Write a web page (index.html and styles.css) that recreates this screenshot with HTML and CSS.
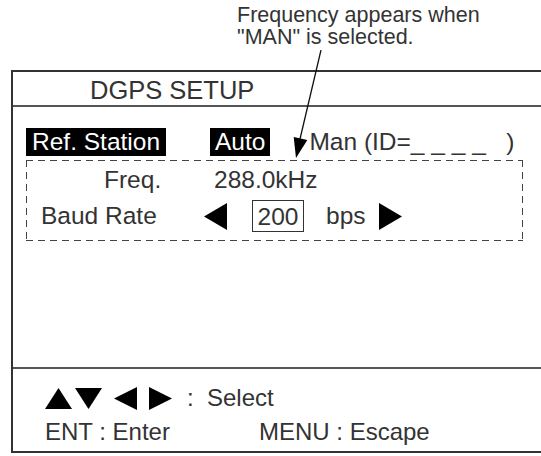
FILE: index.html
```html
<!DOCTYPE html>
<html>
<head>
    <meta charset="utf-8" />
    <title>DGPS SETUP</title>
    <link rel="stylesheet" href="styles.css">
</head>
<body>
    <div class="note">
        <div>Frequency appears when</div>
        <div>"MAN" is selected.</div>
    </div>

    <div class="screen">
        <div class="title">DGPS SETUP</div>
        <div class="main">
            <div class="opts">
                <span class="hl ref">Ref. Station</span>
                <span class="hl auto">Auto</span>
                <span class="man">Man (ID=_ _ _ _   )</span>
            </div>
            <div class="dashbox">
                <div class="row freq">
                    <span class="lbl">Freq.</span>
                    <span>288.0kHz</span>
                </div>
                <div class="row baud">
                    <span class="lbl">Baud Rate</span>
                    <svg class="tri" width="23" height="27" viewBox="0 0 23 27"><polygon points="23,0 23,27 0,13.5" /></svg>
                    <span class="val">200</span>
                    <span class="unit">bps</span>
                    <svg class="tri" width="23" height="27" viewBox="0 0 23 27"><polygon points="0,0 0,27 23,13.5" /></svg>
                </div>
            </div>
        </div>
        <div class="foot">
            <div class="keys">
                <svg width="27" height="21" viewBox="0 0 27 21"><polygon points="13.5,0 27,21 0,21" /></svg>
                <svg width="27" height="21" viewBox="0 0 27 21"><polygon points="0,0 27,0 13.5,21" /></svg>
                <svg class="lr" width="23" height="23" viewBox="0 0 23 23"><polygon points="23,0 23,23 0,11.5" /></svg>
                <svg class="lr" width="23" height="23" viewBox="0 0 23 23"><polygon points="0,0 0,23 23,11.5" /></svg>
                <span class="sel">:&nbsp; Select</span>
            </div>
            <div class="cmds">
                <span class="ent">ENT : Enter</span>
                <span>MENU : Escape</span>
            </div>
        </div>
    </div>

    <!--callout arrow-->
    <svg class="arrow" width="40" height="112" viewBox="290 50 40 112">
        <line x1="321" y1="50" x2="300" y2="139" stroke="#111" stroke-width="1.3" />
        <polygon points="296,158 307.3,140.1 293.7,136.9" fill="#000" />
    </svg>
</body>
</html>
```

FILE: styles.css
```css
* {margin: 0;padding: 0;}
body {font-family: "Liberation Sans", Arial, Helvetica, sans-serif;color: #333;background: #fff;position: relative;height: 456px;overflow: hidden;}
/*callout*/
.note {margin-left: 237px;padding-top: 4px;font-size: 21.5px;line-height: 22px;height: 44px;}
.note div {height: 22px;}
.arrow {position: absolute;left: 290px;top: 50px;pointer-events: none;}
/*screen*/
.screen {margin: 22px 0 0 11px;border: 2px solid #333;border-right: 0;height: 379px;display: flex;flex-direction: column;}
.title {height: 33px;line-height: 37px;padding-left: 77px;font-size: 25.5px;border-bottom: 2px solid #555;}
.main {flex: 1;padding: 21px 0 0 13px;font-size: 24.5px;}
.opts {display: flex;align-items: center;height: 28px;white-space: pre;}
.hl {background: #000;color: #fff;line-height: 28px;}
.ref {padding: 0 6px;}
.auto {padding: 0 5px;margin-left: 44px;}
.man {margin-left: 39px;}
.dashbox {margin-top: 4px;width: 497px;height: 81px;box-sizing: border-box;padding-top: 2px;
    background:
        linear-gradient(90deg, #444 58%, transparent 0) top left / 12px 1px repeat-x,
        linear-gradient(90deg, #444 58%, transparent 0) bottom left / 12px 1px repeat-x,
        linear-gradient(#444 58%, transparent 0) top left / 1px 12px repeat-y,
        linear-gradient(#444 58%, transparent 0) top right / 1px 12px repeat-y;}
.row {display: flex;align-items: center;height: 36px;}
.freq {padding-left: 78px;}
.freq .lbl {width: 110px;}
.baud {padding-left: 15px;}
.baud .lbl {width: 163px;}
.tri {fill: #000;}
.val {margin-left: 25px;border: 1px solid #333;width: 50px;height: 30px;line-height: 31px;text-align: center;}
.unit {margin: 0 13px 0 22px;}
/*footer*/
.foot {height: 82px;border-top: 2px solid #555;padding-left: 32px;font-size: 24px;}
.keys {display: flex;align-items: center;gap: 3px;height: 26px;margin-top: 16px;}
.keys svg {fill: #000;}
.keys .lr {margin-left: 9px;}
.sel {margin-left: 12px;}
.cmds {display: flex;margin-top: 7px;height: 28px;line-height: 28px;}
.ent {width: 214px;}
```
